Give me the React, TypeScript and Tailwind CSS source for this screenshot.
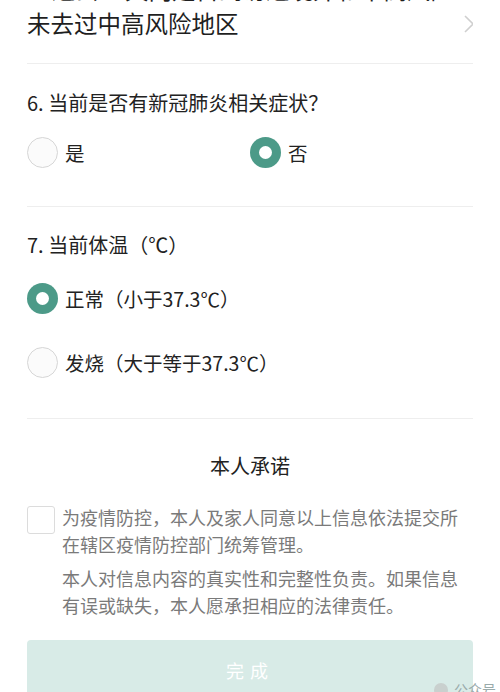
import React from "react";

const font = { fontFamily: '"Noto Sans CJK SC", "Noto Sans", sans-serif' };

function Radio({ checked, label }: { checked?: boolean; label: string }) {
  return (
    <div className="flex items-center gap-[7px]">
      {checked ? (
        <div className="w-[31px] h-[31px] rounded-full bg-[#4c9a88] flex items-center justify-center">
          <div className="w-[13px] h-[13px] rounded-full bg-white" />
        </div>
      ) : (
        <div className="w-[31px] h-[31px] rounded-full border-[1.5px] border-[#d6d6d6] bg-[#fbfbfb]" />
      )}
      <span className="text-[19.5px] leading-[28px] text-[#222]">{label}</span>
    </div>
  );
}

export default function App() {
  return (
    <div className="w-[500px] h-[692px] bg-white overflow-hidden relative" style={font}>
      <div className="px-[27px]">
        <div className="h-[64px] border-b border-[#eeeeee] overflow-hidden flex justify-between">
          <div className="mt-[-28px] text-[23.5px] leading-[34px] text-[#1f1f1f]">
            <div className="whitespace-nowrap">7. 过去14天内是否到访过境外和中高风险</div>
            <div className="whitespace-nowrap">未去过中高风险地区</div>
          </div>
          <div className="flex items-start pt-[14px]">
            <svg width="12" height="20" viewBox="0 0 12 20" className="mr-[-2px]">
              <path d="M2 2 L10 10 L2 18" fill="none" stroke="#cfcfcf" strokeWidth="1.6" />
            </svg>
          </div>
        </div>

        <div className="pt-[25px] pb-[38px] border-b border-[#eeeeee]">
          <div className="text-[20px] leading-[28px] text-[#222]">6. 当前是否有新冠肺炎相关症状？</div>
          <div className="mt-[20px] flex">
            <div className="w-[223px]">
              <Radio label="是" />
            </div>
            <Radio checked label="否" />
          </div>
        </div>

        <div className="pt-[24px] pb-[40px] border-b border-[#eeeeee]">
          <div className="text-[20px] leading-[28px] text-[#222]">7. 当前体温（℃）</div>
          <div className="mt-[24px]">
            <Radio checked label="正常（小于37.3℃）" />
          </div>
          <div className="mt-[33px]">
            <Radio label="发烧（大于等于37.3℃）" />
          </div>
        </div>

        <div className="pt-[33px] text-center text-[20px] leading-[28px] text-[#222]">本人承诺</div>

        <div className="mt-[24px] flex gap-[7px]">
          <div className="mt-[2px] w-[28px] h-[28px] shrink-0 rounded-[3px] border-[1.5px] border-[#dcdcdc]" />
          <div className="text-[18px] leading-[27px] text-[#7a7a7a]">
            <p>为疫情防控，本人及家人同意以上信息依法提交所在辖区疫情防控部门统筹管理。</p>
            <p className="mt-[7px]">本人对信息内容的真实性和完整性负责。如果信息有误或缺失，本人愿承担相应的法律责任。</p>
          </div>
        </div>

        <div className="mt-[21px] h-[70px] rounded-[4px] bg-[#d8ebe7] flex items-center justify-center pb-[10px]">
          <span className="text-[18px] text-white tracking-[6px]">完成</span>
        </div>
      </div>
      <div className="absolute right-[4px] bottom-[-8px] flex items-center gap-[6px] text-[14px] text-[#9aa]">
        <div className="w-[14px] h-[14px] rounded-full bg-[#c9d0ce]" />
        <span>公众号</span>
      </div>
    </div>
  );
}
